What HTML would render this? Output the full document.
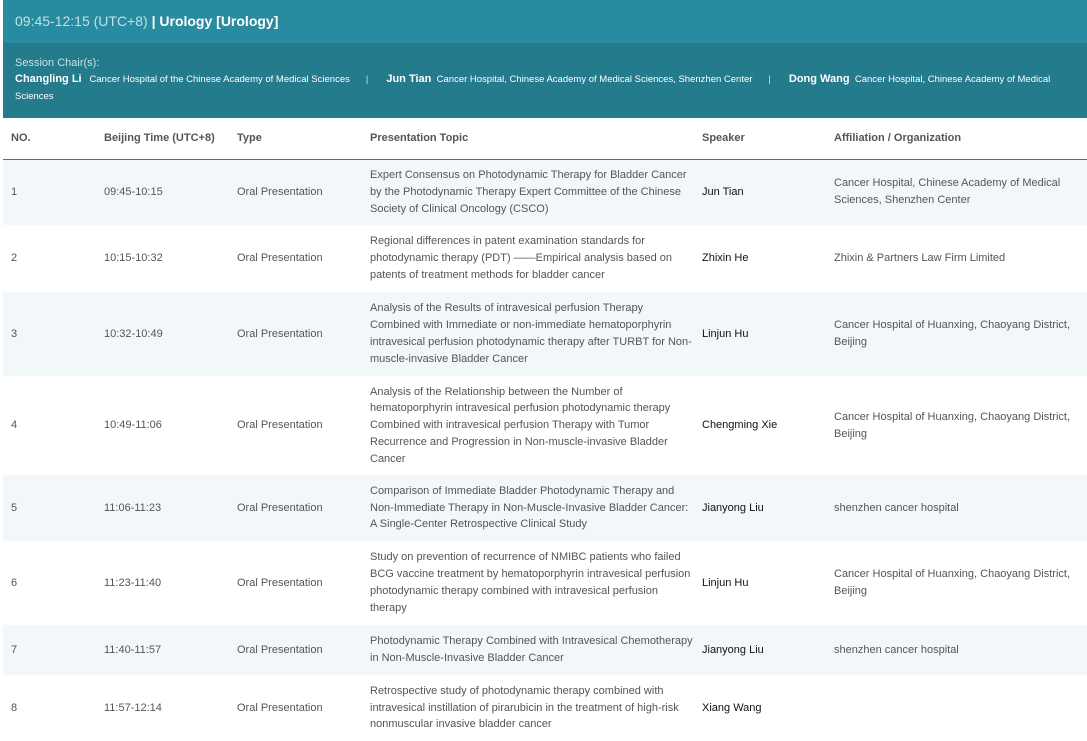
<!DOCTYPE html>
<html><head><meta charset="utf-8"><style>
*{margin:0;padding:0;box-sizing:border-box}
body{width:1087px;height:739px;overflow:hidden;background:#fff;font-family:"Liberation Sans",Arial,sans-serif;position:relative}
.hd{position:absolute;left:3px;top:0;width:1084px;height:43px;background:#288b9f;font-size:14px;line-height:43px;padding-left:12px;color:#bfe0e6}
.hd b{color:#fff}
.ch{position:absolute;left:3px;top:43px;width:1084px;height:75px;background:#247b8b;padding:13px 0 0 12px;color:#fff;font-size:9.5px;line-height:17px}
.ch .l{font-size:11px;color:#c8e3e8;line-height:15px}
.ch b{font-size:11px;font-weight:bold}
.sep{color:#c8e3e8;margin:0 18px 0 16px}
table{position:absolute;left:3px;top:118px;width:1084px;border-collapse:collapse;font-size:11px;color:#555;table-layout:fixed}
th{height:41px;text-align:left;font-weight:bold;border-bottom:1px solid #2a8596;padding-left:8px}
td{padding-left:8px;line-height:16.8px;vertical-align:middle}
tr.a td{background:#f2f8f9}
td.s{color:#111}
</style></head><body>
<div class="hd">09:45-12:15 (UTC+8) <b>| Urology [Urology]</b></div>
<div class="ch"><div class="l">Session Chair(s):</div>
<b>Changling Li</b>&nbsp;&nbsp; Cancer Hospital of the Chinese Academy of Medical Sciences<span class="sep">|</span><b>Jun Tian</b>&nbsp; Cancer Hospital, Chinese Academy of Medical Sciences, Shenzhen Center<span class="sep">|</span><b>Dong Wang</b>&nbsp; Cancer Hospital, Chinese Academy of Medical<br>Sciences</div>
<table>
<colgroup><col style="width:93px"><col style="width:133px"><col style="width:133px"><col style="width:332px"><col style="width:132px"><col></colgroup>
<tr><th>NO.</th><th>Beijing Time (UTC+8)</th><th>Type</th><th>Presentation Topic</th><th>Speaker</th><th>Affiliation / Organization</th></tr>
<tr class="a" style="height:66px"><td>1</td><td>09:45-10:15</td><td>Oral Presentation</td><td>Expert Consensus on Photodynamic Therapy for Bladder Cancer by the Photodynamic Therapy Expert Committee of the Chinese Society of Clinical Oncology (CSCO)</td><td class="s">Jun Tian</td><td>Cancer Hospital, Chinese Academy of Medical Sciences, Shenzhen Center</td></tr>
<tr style="height:67px"><td>2</td><td>10:15-10:32</td><td>Oral Presentation</td><td>Regional differences in patent examination standards for photodynamic therapy (PDT) ——Empirical analysis based on patents of treatment methods for bladder cancer</td><td class="s">Zhixin He</td><td>Zhixin &amp; Partners Law Firm Limited</td></tr>
<tr class="a" style="height:84px"><td>3</td><td>10:32-10:49</td><td>Oral Presentation</td><td>Analysis of the Results of intravesical perfusion Therapy Combined with Immediate or non-immediate hematoporphyrin intravesical perfusion photodynamic therapy after TURBT for Non-muscle-invasive Bladder Cancer</td><td class="s">Linjun Hu</td><td>Cancer Hospital of Huanxing, Chaoyang District, Beijing</td></tr>
<tr style="height:99px"><td>4</td><td>10:49-11:06</td><td>Oral Presentation</td><td>Analysis of the Relationship between the Number of hematoporphyrin intravesical perfusion photodynamic therapy Combined with intravesical perfusion Therapy with Tumor Recurrence and Progression in Non-muscle-invasive Bladder Cancer</td><td class="s">Chengming Xie</td><td>Cancer Hospital of Huanxing, Chaoyang District, Beijing</td></tr>
<tr class="a" style="height:66px"><td>5</td><td>11:06-11:23</td><td>Oral Presentation</td><td>Comparison of Immediate Bladder Photodynamic Therapy and Non-Immediate Therapy in Non-Muscle-Invasive Bladder Cancer: A Single-Center Retrospective Clinical Study</td><td class="s">Jianyong Liu</td><td>shenzhen cancer hospital</td></tr>
<tr style="height:84px"><td>6</td><td>11:23-11:40</td><td>Oral Presentation</td><td>Study on prevention of recurrence of NMIBC patients who failed BCG vaccine treatment by hematoporphyrin intravesical perfusion photodynamic therapy combined with intravesical perfusion therapy</td><td class="s">Linjun Hu</td><td>Cancer Hospital of Huanxing, Chaoyang District, Beijing</td></tr>
<tr class="a" style="height:50px"><td>7</td><td>11:40-11:57</td><td>Oral Presentation</td><td>Photodynamic Therapy Combined with Intravesical Chemotherapy in Non-Muscle-Invasive Bladder Cancer</td><td class="s">Jianyong Liu</td><td>shenzhen cancer hospital</td></tr>
<tr style="height:66px"><td>8</td><td>11:57-12:14</td><td>Oral Presentation</td><td>Retrospective study of photodynamic therapy combined with intravesical instillation of pirarubicin in the treatment of high-risk nonmuscular invasive bladder cancer</td><td class="s">Xiang Wang</td><td></td></tr>
</table>
</body></html>
